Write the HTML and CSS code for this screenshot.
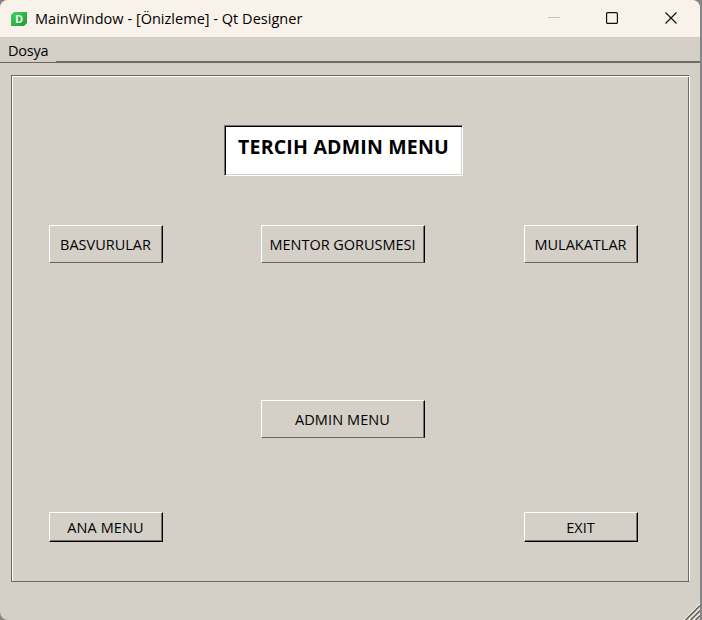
FILE: index.html
```html
<!DOCTYPE html>
<html lang="tr">
<head>
<meta charset="utf-8">
<title>MainWindow</title>
<link rel="stylesheet" href="styles.css">
</head>
<body>
<div class="window">
  <header class="titlebar">
    <svg class="logo" width="16" height="14" viewBox="0 0 16 14">
      <defs><linearGradient id="g" x1="0" y1="0" x2="1" y2="1"><stop offset="0" stop-color="#48d45d"/><stop offset=".5" stop-color="#2fb548"/><stop offset="1" stop-color="#209638"/></linearGradient></defs>
      <path d="M3 0h13v11l-3 3H0V3z" fill="url(#g)"/>
      <text class="logo-letter" x="8.2" y="11" text-anchor="middle">D</text>
    </svg>
    <span class="title">MainWindow - [Önizleme] - Qt Designer</span>
    <svg class="controls" width="132" height="14" viewBox="0 0 132 14">
      <path d="M1 5.5h12" stroke="#c9c2bd"/>
      <rect x="59.6" y="0.6" width="10.8" height="10.8" rx="1" fill="none" stroke="#111" stroke-width="1.2"/>
      <path d="M118.5 .5l11 11m0-11l-11 11" stroke="#111" stroke-width="1.2"/>
    </svg>
  </header>
  <nav class="menubar"><span class="menu">Dosya</span><span class="menu-rest"></span></nav>
  <main class="panel">
    <h1 class="heading"><span class="heading-text">TERCIH ADMIN MENU</span></h1>
    <button class="btn applications"><span>BASVURULAR</span></button>
    <button class="btn mentor"><span>MENTOR GORUSMESI</span></button>
    <button class="btn interviews"><span>MULAKATLAR</span></button>
    <button class="btn admin"><span>ADMIN MENU</span></button>
    <button class="btn thick home"><span>ANA MENU</span></button>
    <button class="btn thick exit"><span>EXIT</span></button>
  </main>
  <svg class="grip" width="16" height="16" viewBox="0 0 16 16">
    <path d="M0 16L16 0M5 16L16 5M10 16L16 10" stroke="#fff" stroke-width="1.2"/>
    <path d="M1.5 16L16 1.5M6.5 16L16 6.5M11.5 16L16 11.5" stroke="#69665f" stroke-width="1.7"/>
  </svg>
</div>
</body>
</html>
```
FILE: styles.css
```css
* { box-sizing: border-box; }
body {
  margin: 0;
  background: #858585;
  font-family: "Open Sans", "Noto Sans", sans-serif;
  color: #000;
}
.window {
  position: relative;
  width: 700px;
  height: 620px;
  background: #d4d0c8;
  border-radius: 8px 8px 0 8px;
  overflow: hidden;
}
.titlebar {
  display: flex;
  align-items: center;
  height: 37px;
  padding: 0 21px 0 11px;
  background: #f9f2ea;
}
.logo { flex: none; }
.logo-letter { font: bold 11px "Open Sans", sans-serif; fill: #e8ffe9; }
.title {
  margin-left: 8px;
  font-size: 14.5px;
  line-height: 37px;
  letter-spacing: 0.02px;
  white-space: nowrap;
}
.controls { margin-left: auto; }
.menubar { display: flex; height: 26px; }
.menu {
  width: 56px;
  padding-left: 8px;
  border-bottom: 1px solid #69665f;
  font-size: 14.5px;
  line-height: 27px;
  letter-spacing: -0.2px;
}
.menu-rest { flex: 1; border-bottom: 2px solid #6f6b64; }
.panel {
  display: grid;
  grid-template-columns: 114px 98px 164px 99px 114px;
  grid-template-rows: 50px 50px 38px 137px 38px 74px 30px;
  width: 679px;
  height: 507px;
  margin: 12px 0 0 11px;
  padding: 49px 0 0 37px;
  border: 1px solid #6b6861;
  border-right-color: #fff;
  box-shadow: inset 1px 1px #fff, inset -1px 0 #6b6861;
}
.heading {
  grid-area: 1 / 2 / 2 / 5;
  width: 239px;
  height: 51px;
  margin: 0 0 0 61px;
  border: 1px solid;
  border-color: #77736c #fff #fff #77736c;
  background: #fff;
  box-shadow: inset 1px 1px #000, inset -1px -1px #d4d0c8;
  font-size: 19.5px;
  line-height: 42px;
  letter-spacing: 0.2px;
  text-align: center;
  white-space: nowrap;
}
.btn {
  padding: 2px 1px 0 0;
  border: 1px solid;
  border-color: #fff #000 #69665f #fff;
  background: #d4d0c8;
  box-shadow: inset -1px 0 #77736c;
  color: #000;
  font: 14.5px/34px "Open Sans", "Noto Sans", sans-serif;
  text-align: center;
  white-space: nowrap;
}
.thick {
  border-bottom-color: #000;
  box-shadow: inset -1px -1px #77736c;
  line-height: 26px;
}
.applications { grid-area: 3 / 1; }
.mentor { grid-area: 3 / 3; letter-spacing: -0.03px; }
.interviews { grid-area: 3 / 5; }
.admin { grid-area: 5 / 3; letter-spacing: 0.1px; }
.home { grid-area: 7 / 1; letter-spacing: 0.1px; }
.exit { grid-area: 7 / 5; }
.grip { position: absolute; right: 0; bottom: 0; }
```
